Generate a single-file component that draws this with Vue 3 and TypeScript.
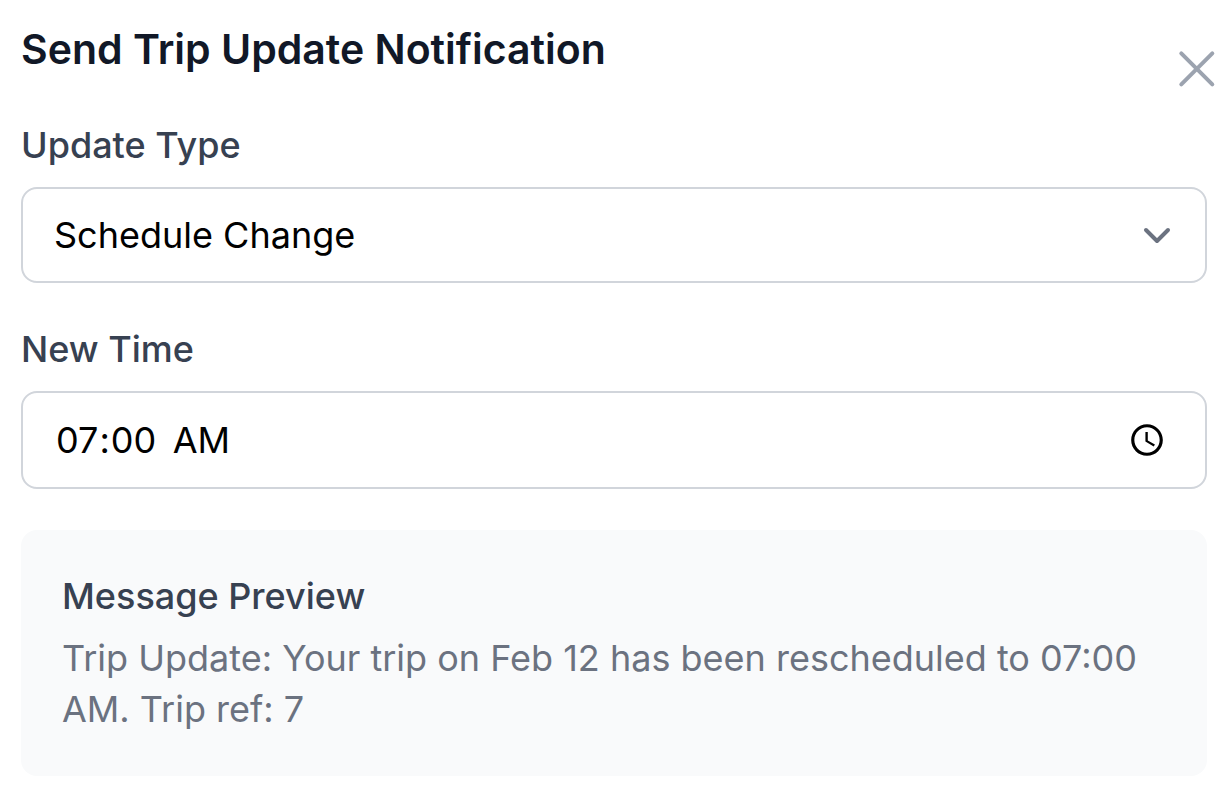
<script setup lang="ts">
import { computed, ref } from 'vue'

const updateType = ref('Schedule Change')
const newTime = ref('07:00')

const displayTime = computed(() => {
  const [h, m] = newTime.value.split(':')
  const hour = Number(h)
  const twelve = String(hour % 12 || 12).padStart(2, '0')
  return `${twelve}:${m} ${hour < 12 ? 'AM' : 'PM'}`
})
</script>

<template>
  <main class="dialog">
    <header class="head">
      <h1>Send Trip Update Notification</h1>
      <button class="close" type="button" aria-label="Close">
        <svg viewBox="0 0 48 48" fill="none" stroke="currentColor" stroke-width="4" stroke-linecap="round">
          <path d="M8.3 8.3l31 31M39.3 8.3l-31 31" />
        </svg>
      </button>
    </header>

    <div class="field">
      <label for="update-type">Update Type</label>
      <div class="control">
        <select id="update-type" v-model="updateType">
          <option>Schedule Change</option>
          <option>Cancellation</option>
        </select>
        <svg class="chevron" viewBox="0 0 40 40" fill="none" stroke="currentColor" stroke-width="4" stroke-linecap="round" stroke-linejoin="round">
          <path d="M9 15l11 11 11-11" />
        </svg>
      </div>
    </div>

    <div class="field">
      <label for="new-time">New Time</label>
      <input id="new-time" v-model="newTime" type="time" />
    </div>

    <section class="preview">
      <h2>Message Preview</h2>
      <p>Trip Update: Your trip on Feb 12 has been rescheduled to {{ displayTime }}. Trip ref: 7</p>
    </section>
  </main>
</template>

<style>
body {
  margin: 0;
  background: #fff;
}
</style>

<style scoped>
.dialog {
  box-sizing: border-box;
  padding: 20px 25px 21px 21px;
  font-family: Inter, "Liberation Sans", sans-serif;
  color: #000;
  -webkit-font-smoothing: antialiased;
}
.head {
  display: flex;
  justify-content: space-between;
  margin-bottom: 41px;
}
h1 {
  margin: 0;
  font-size: 41px;
  line-height: 59px;
  font-weight: 600;
  color: #111827;
}
.close {
  width: 48px;
  height: 48px;
  margin: 25px -14px -17px 0;
  padding: 0;
  border: 0;
  background: none;
  color: #9ca3af;
}
.close svg {
  display: block;
}
.field {
  margin-bottom: 41px;
}
label {
  display: block;
  margin-bottom: 16px;
  font-size: 36px;
  line-height: 51px;
  font-weight: 500;
  color: #374151;
}
.control {
  position: relative;
}
select,
input {
  box-sizing: border-box;
  display: block;
  width: 100%;
  height: 96px;
  border: 2px solid #d1d5db;
  border-radius: 16px;
  background: #fff;
  font: 400 36px/51px Inter, "Liberation Sans", sans-serif;
  color: #000;
}
select {
  appearance: none;
  padding: 0 80px 0 31px;
}
input {
  height: 98px;
  padding: 0 36px 0 32px;
}
input::-webkit-datetime-edit-ampm-field {
  margin-left: 8px;
}
.chevron {
  position: absolute;
  top: 28px;
  right: 30px;
  width: 40px;
  height: 40px;
  color: #6b7280;
  pointer-events: none;
}
.preview {
  padding: 41px;
  border-radius: 16px;
  background: #f9fafb;
}
h2 {
  margin: 0 0 11px;
  font-size: 36px;
  line-height: 51px;
  font-weight: 500;
  color: #374151;
}
p {
  margin: 0;
  font-size: 36px;
  line-height: 51px;
  color: #6b7280;
}
</style>
